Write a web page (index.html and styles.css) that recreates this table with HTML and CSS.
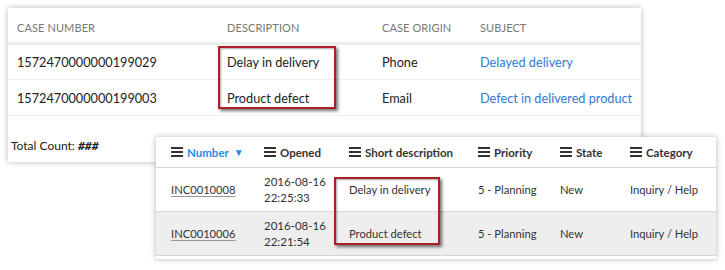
FILE: index.html
```html
<!DOCTYPE html>
<html>
<head>
<meta charset="utf-8">
<link rel="stylesheet" href="styles.css">
</head>
<body>
<div class="stage">
  <div class="card-a">
    <div class="a-row a-head">
      <div>CASE NUMBER</div><div>DESCRIPTION</div><div>CASE ORIGIN</div><div>SUBJECT</div>
    </div>
    <div class="a-row a-body first">
      <div>1572470000000199029</div><div>Delay in delivery</div><div>Phone</div><div class="link">Delayed delivery</div>
    </div>
    <div class="a-row a-body">
      <div>1572470000000199003</div><div>Product defect</div><div>Email</div><div class="link">Defect in delivered product</div>
    </div>
    <div class="total">Total Count: <b><i>###</i></b></div>
    <div class="mark mark-a"></div>
  </div>

  <div class="card-b">
    <div class="b-row b-head">
      <div class="sorted"><svg class="ham" viewBox="0 0 12 10"><rect y="0" width="12" height="2"/><rect y="4" width="12" height="2"/><rect y="8" width="12" height="2"/></svg>Number <span class="tri">▼</span></div>
      <div><svg class="ham" viewBox="0 0 12 10"><rect y="0" width="12" height="2"/><rect y="4" width="12" height="2"/><rect y="8" width="12" height="2"/></svg>Opened</div>
      <div><svg class="ham" viewBox="0 0 12 10"><rect y="0" width="12" height="2"/><rect y="4" width="12" height="2"/><rect y="8" width="12" height="2"/></svg>Short description</div>
      <div><svg class="ham" viewBox="0 0 12 10"><rect y="0" width="12" height="2"/><rect y="4" width="12" height="2"/><rect y="8" width="12" height="2"/></svg>Priority</div>
      <div><svg class="ham" viewBox="0 0 12 10"><rect y="0" width="12" height="2"/><rect y="4" width="12" height="2"/><rect y="8" width="12" height="2"/></svg>State</div>
      <div><svg class="ham" viewBox="0 0 12 10"><rect y="0" width="12" height="2"/><rect y="4" width="12" height="2"/><rect y="8" width="12" height="2"/></svg>Category</div>
    </div>
    <div class="b-row b-body">
      <div><span class="num">INC0010008</span></div>
      <div class="two">2016-08-16<br>22:25:33</div>
      <div>Delay in delivery</div>
      <div>5 - Planning</div>
      <div>New</div>
      <div>Inquiry / Help</div>
    </div>
    <div class="b-row b-body alt">
      <div><span class="num">INC0010006</span></div>
      <div class="two">2016-08-16<br>22:21:54</div>
      <div>Product defect</div>
      <div>5 - Planning</div>
      <div>New</div>
      <div>Inquiry / Help</div>
    </div>
    <div class="mark mark-b"></div>
  </div>
</div>
</body>
</html>
```

FILE: styles.css
```css
html, body {
  margin: 0;
  padding: 0;
  background: #ffffff;
}
.stage {
  position: relative;
  width: 725px;
  height: 270px;
  padding: 8px 0 0 8px;
  box-sizing: border-box;
}
.card-a {
  position: relative;
  width: 633px;
  height: 154px;
  background: #fff;
  box-shadow: 0 0 6px rgba(0,0,0,0.28);
  font-family: Lato, "Open Sans", sans-serif;
  color: #222;
}
.a-row {
  display: grid;
  grid-template-columns: 210px 155px 98px 1fr;
  padding-left: 9px;
  align-items: center;
}
.a-head {
  height: 37px;
  padding-top: 4px;
  box-sizing: border-box;
  font-size: 11px;
  color: #777;
  letter-spacing: 0.1px;
  border-bottom: 3px solid #ededed;
}
.a-body {
  height: 35px;
  font-size: 12.7px;
  border-bottom: 1px solid #f0f0f0;
}
.a-body.first {
  height: 34px;
}
.a-body .link {
  color: #2f7ad3;
}
.total {
  font-size: 12px;
  padding: 22px 0 0 3px;
  color: #222;
}
.total b i {
  font-weight: 900;
}
.mark {
  position: absolute;
  border: 2px solid #ad1f24;
  box-shadow: 2px 2px 3px rgba(0,0,0,0.55), inset 1px 1px 2px rgba(0,0,0,0.35);
  box-sizing: border-box;
}
.mark-a {
  left: 210px;
  top: 38px;
  width: 118px;
  height: 63px;
}
.card-b {
  position: absolute;
  left: 156px;
  top: 137px;
  width: 560px;
  height: 122px;
  background: #fff;
  box-shadow: 0 0 6px rgba(0,0,0,0.3);
  font-family: Lato, "Source Sans Pro", sans-serif;
  font-size: 11.2px;
  color: #333;
}
.b-row {
  display: grid;
  grid-template-columns: 93px 85px 129px 82px 70px 1fr;
  padding-left: 15px;
  align-items: center;
}
.b-head {
  height: 30px;
  border-bottom: 1px solid #d6d6d6;
  font-weight: 700;
  font-size: 11.5px;
  color: #333;
}
.b-head > div {
  display: flex;
  align-items: center;
}
.ham {
  width: 12px;
  height: 10px;
  fill: #333;
  margin-right: 4px;
}
.sorted {
  color: #2a8be8;
}
.tri {
  font-size: 10px;
  margin-left: 5px;
}
.b-body {
  height: 43px;
  border-bottom: 1px solid #d6d6d6;
}
.b-body.alt {
  background: #eeeeee;
}
.two {
  line-height: 16px;
  font-size: 11.5px;
}
.num {
  text-decoration: underline;
  text-decoration-color: #999;
  text-underline-offset: 2px;
}
.mark-b {
  left: 178px;
  top: 40px;
  width: 106px;
  height: 68px;
}
```
